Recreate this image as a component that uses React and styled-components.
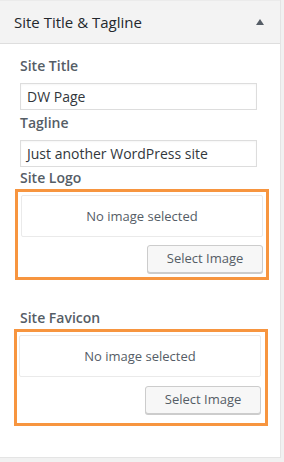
import React from 'react';
import styled, { createGlobalStyle } from 'styled-components';

const GlobalStyle = createGlobalStyle`
  html, body {
    margin: 0;
    padding: 0;
    background: #f1f1f1;
  }
  body {
    font-family: 'Open Sans', 'Liberation Sans', sans-serif;
    color: #555d66;
  }
`;

const Panel = styled.div`
  width: 281px;
  height: 458px;
  box-sizing: border-box;
  background: #fff;
  border-right: 1px solid #e4e4e4;
  border-bottom: 1px solid #e4e4e4;
`;

const SectionHeader = styled.div`
  height: 44px;
  box-sizing: border-box;
  display: flex;
  align-items: center;
  justify-content: space-between;
  padding: 0 14px 1px 14px;
  background: #f3f3f3;
  border-top: 1px solid #ebebeb;
  border-bottom: 1px solid #dedede;
`;

const SectionTitle = styled.h3`
  margin: 0;
  font-size: 15px;
  font-weight: 400;
  color: #23282d;
`;

const Arrow = styled.span`
  width: 0;
  height: 0;
  margin-right: 2px;
  border-left: 4px solid transparent;
  border-right: 4px solid transparent;
  border-bottom: 6px solid #555d66;
`;

const Body = styled.div`
  padding: 12px 0 0 20px;
`;

const Label = styled.div`
  font-size: 14px;
  line-height: 19px;
  font-weight: 600;
  color: #555d66;
  margin: ${(p) => p.$top || 0}px 0 8px;
`;

const TextInput = styled.div`
  width: 237px;
  height: 27px;
  box-sizing: border-box;
  border: 1px solid #ddd;
  padding: 0 6px;
  display: flex;
  align-items: center;
  font-size: 14px;
  color: #32373c;
  box-shadow: inset 0 1px 2px rgba(0, 0, 0, 0.04);
`;

const Highlight = styled.div`
  width: 254px;
  box-sizing: border-box;
  margin-left: ${(p) => p.$shift}px;
  margin-top: -6px;
  padding: 3px 4px ${(p) => p.$bottom}px ${(p) => 8 + p.$shift}px;
  border: 3px solid #f7953f;
`;

const MediaControl = styled.div`
  width: 242px;
  display: flex;
  flex-direction: column;
  align-items: flex-end;
`;

const Placeholder = styled.div`
  align-self: stretch;
  height: 42px;
  box-sizing: border-box;
  border: 1px solid #eaeaea;
  border-radius: 2px;
  display: flex;
  align-items: center;
  justify-content: center;
  font-size: 13px;
  color: #555d66;
`;

const Button = styled.button`
  margin-top: ${(p) => p.$gap}px;
  width: 116px;
  height: 28px;
  box-sizing: border-box;
  border: 1px solid #cccccc;
  border-radius: 3px;
  background: #f7f7f7;
  box-shadow: 0 1px 0 #cccccc;
  font-family: inherit;
  font-size: 13px;
  color: #555d66;
  padding: 0 0 2px;
`;

const ImageField = ({ label, top, shift, gap, bottom }) => (
  <>
    <Label $top={top}>{label}</Label>
    <Highlight $shift={shift} $bottom={bottom}>
      <MediaControl>
        <Placeholder>No image selected</Placeholder>
        <Button $gap={gap}>Select Image</Button>
      </MediaControl>
    </Highlight>
  </>
);

export default function App() {
  return (
    <>
      <GlobalStyle />
      <Panel>
        <SectionHeader>
          <SectionTitle>Site Title &amp; Tagline</SectionTitle>
          <Arrow />
        </SectionHeader>
        <Body>
          <Label>Site Title</Label>
          <TextInput>DW Page</TextInput>
          <Label $top={3}>Tagline</Label>
          <TextInput>Just another WordPress site</TextInput>
          <ImageField label="Site Logo" top={1} shift={-5} gap={8} bottom={4} />
          <ImageField label="Site Favicon" top={28} shift={-6} gap={9} bottom={9} />
        </Body>
      </Panel>
    </>
  );
}
